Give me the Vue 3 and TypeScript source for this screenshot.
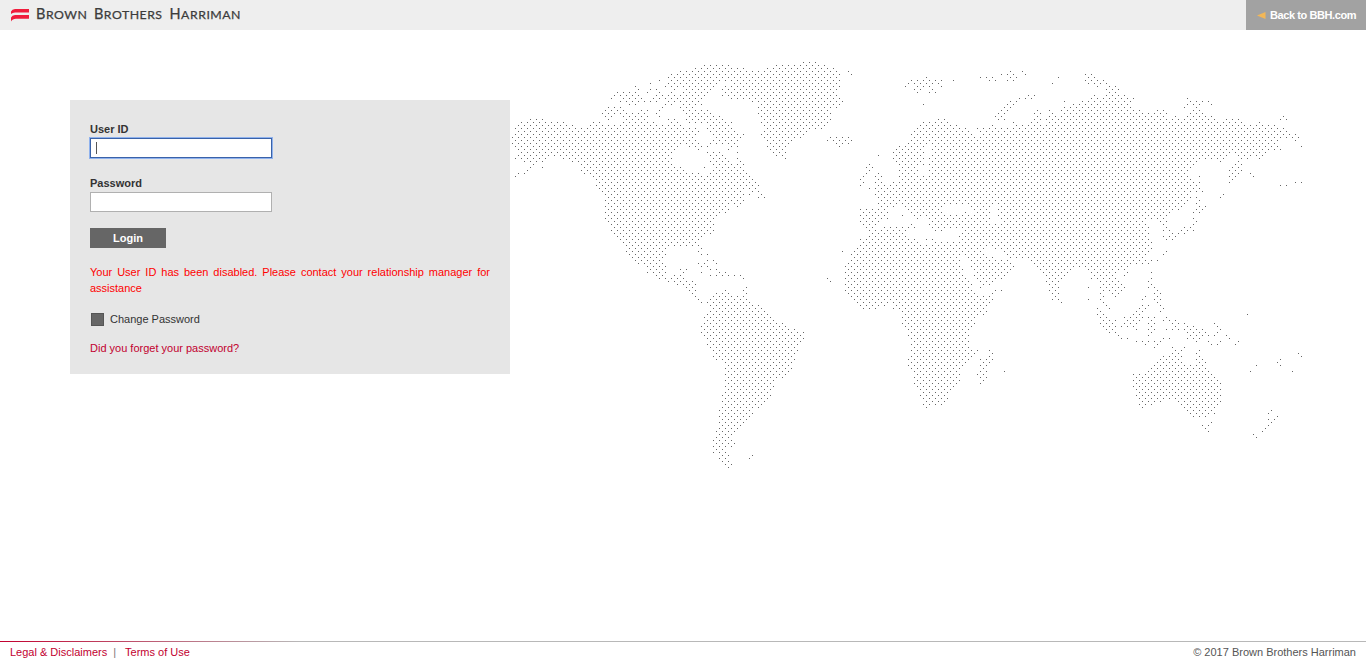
<script setup lang="ts">
import { ref, onMounted } from 'vue'

type Point = [number, number]

// Outlines are written in thirds of a pixel, relative to a page origin.
function trace(ox: number, oy: number, text: string): Point[] {
  return text.trim().split(/\s+/).map((pair) => {
    const [x, y] = pair.split(',').map(Number)
    return [ox + x / 3, oy + y / 3] as Point
  })
}

const NW: Point = [510, 55]
const ATL: Point = [680, 55]
const EUR: Point = [850, 55]
const SIB: Point = [1080, 55]
const SAM: Point = [600, 255]
const AFR: Point = [820, 250]
const AUS: Point = [1040, 240]

const landData: [Point, string][] = [
  // North America
  [NW, '7,247 16,220 34,202 61,193 97,193 106,202 160,202 187,211 196,220 214,220 250,202 268,202 277,211 349,211 340,202 349,184 367,175 385,175 394,166 412,166 412,193 430,202 448,211 466,211 475,193 493,193 511,211 520,220 547,220 556,211 565,229 556,238 556,256 565,265 565,283 538,274 538,265 511,265 493,283 484,292 484,328 493,337 511,337 520,346 547,355 565,355 565,364 592,364 592,535 574,544 556,571 475,571 466,580 466,598 457,607 457,625 385,625 367,607 349,589 349,571 322,544 304,526 304,508 286,490 286,418 259,391 259,373 241,355 223,355 214,346 214,328 205,319 187,319 178,310 160,310 151,301 133,301 106,310 97,319 43,319 34,310 16,310 25,292 16,274 7,265'],
  [ATL, '0,364 10,355 55,355 64,373 82,364 100,346 91,319 82,292 118,292 136,301 145,310 154,328 172,328 172,310 190,328 190,346 235,391 226,400 253,427 235,427 226,409 208,418 217,400 199,400 181,427 190,436 172,454 154,445 136,472 109,481 100,490 100,526 91,535 73,535 55,544 55,571 64,580 46,571 0,571'],
  [ATL, '10,166 82,166 91,175 118,184 136,202 154,202 163,220 172,229 190,238 172,256 172,274 145,283 145,265 91,265 100,256 109,247 91,229 82,220 82,202 64,202 46,211 28,202 18,184'],
  [ATL, '73,31 46,40 19,49 1,49 -26,58 -35,67 -35,85 -44,94 -26,103 -35,112 -44,130 -53,157 -71,175 -62,184 -44,148 -26,148 -8,130 0,157 10,166 18,193 82,184 82,166 28,166 37,157 64,148 73,130 82,112 118,76 154,76 163,85 136,94 127,103 136,112 127,121 145,121 154,130 208,130 217,139 235,148 235,175 244,184 244,202 253,220 244,238 253,238 262,274 289,301 307,301 316,310 316,283 325,265 343,247 361,247 379,238 388,220 424,220 442,211 451,193 451,166 469,157 487,139 469,121 469,103 478,94 478,49 460,40 433,31 406,22 370,22 343,31 289,31 262,40 253,49 199,49 190,40 154,40 145,31'],
  [NW, '304,130 322,112 376,112 394,130 403,139 385,139 376,148 358,148 331,139 340,130 322,121'],
  [NW, '277,175 295,157 331,157 349,175 340,193 331,184 322,175 313,184 295,193'],
  [NW, '421,139 439,121 457,121 439,139'],
  [ATL, '442,256 451,247 505,247 514,256 505,265 478,274 469,265 460,256'],
  [SAM, '97,7 106,16 124,16 142,34 142,52 160,52 178,70 196,70 205,79 223,79 232,88 250,88 277,115 304,142 286,124 286,88 277,79 259,79 250,70 250,52 259,43 241,43 241,61 223,61 214,70 196,61 196,34 187,25 187,7'],
  // South America
  [SAM, '322,142 331,133 349,115 367,115 376,106 394,124 430,124 430,106 439,97 439,133 457,151 475,151 529,205 547,205 565,223 583,223 610,232 610,250 592,268 592,286 583,313 574,340 547,367 529,367 520,376 520,394 511,421 475,457 457,457 457,475 403,529 394,538 394,556 403,565 394,574 376,583 385,601 385,619 394,628 385,637 358,610 358,592 340,592 340,556 349,547 349,529 358,520 358,466 367,457 367,421 376,412 376,322 367,313 349,313 340,304 340,286 322,268 322,250 304,232 304,214 313,205 313,187 340,160 331,151'],
  // Europe and western Asia
  [EUR, '130,292 148,274 166,274 184,256 184,238 220,202 247,202 265,193 283,193 301,211 319,211 346,220 373,238 382,247 391,238 382,220 418,220 427,211 436,220 490,220 499,211 517,211 544,202 553,193 553,175 562,166 571,175 571,193 580,211 589,193 598,166 625,193 634,166 643,139 643,157 670,148 688,148 697,139 715,139 715,607 4,607 22,580 31,553 49,544 67,526 94,526 103,517 166,517 166,544 193,553 211,571 229,571 256,562 328,562 328,544 337,526 328,517 301,517 274,526 256,526 238,508 238,481 211,481 202,490 184,472 166,454 139,445 130,454 103,454 112,472 112,490 94,499 76,508 58,526 49,517 31,499 40,490 31,481 31,463 67,463 85,454 85,445 76,418 76,400 94,400 103,391 121,391 148,373 148,328 130,310'],
  // Siberia and China
  [SIB, '7,139 25,139 43,121 52,130 79,121 88,112 106,112 133,121 160,130 151,139 151,157 178,166 196,175 214,175 232,166 250,166 259,175 268,202 286,184 304,193 322,184 340,166 349,157 358,166 367,175 394,184 412,202 430,202 439,193 475,193 493,211 529,211 538,202 547,211 583,211 592,220 610,220 637,247 601,247 592,256 592,274 583,283 565,292 538,310 529,301 502,310 493,301 484,310 484,346 448,382 448,346 466,328 475,310 466,292 448,292 421,319 412,310 358,310 322,346 322,364 349,382 358,364 358,400 367,409 349,409 349,391 340,391 331,436 304,463 286,463 259,481 250,490 214,490 196,499 205,517 205,544 214,562 214,580 205,589 196,607 196,625 7,625'],
  [AUS, '0,7 334,7 334,25 289,70 271,70 253,88 235,88 226,97 226,115 253,142 226,169 208,151 190,133 190,187 181,178 190,169 181,160 181,124 172,115 154,115 154,97 136,79 100,79 55,124 55,160 46,178 37,178 28,151 19,124 0,88'],
  [AFR, '571,0 571,22 625,22 652,49 670,58 679,94 688,121 697,148 715,148 715,0'],
  // Africa and Arabia
  [AFR, '436,-5 436,4 445,31 454,49 445,58 463,76 472,94 481,112 508,103 526,85 544,85 580,49 571,22 571,-5'],
  [AFR, '103,4 94,13 76,49 76,121 112,166 130,175 166,175 193,166 202,157 220,157 220,175 238,175 247,184 247,220 265,238 265,265 274,283 274,310 265,328 265,346 283,364 283,400 301,418 301,436 310,463 319,472 328,463 364,463 382,445 400,409 418,391 418,373 436,337 454,319 472,301 445,301 445,247 463,220 463,202 490,193 499,184 517,148 517,130 544,121 526,121 508,130 490,139 472,139 472,130 454,103 436,85 427,67 418,31 418,4'],
  [AFR, '508,301 517,310 517,328 499,364 499,382 481,400 481,382 472,373 481,364 481,328 499,328'],
  // Indonesia and Australia
  [AUS, '172,205 190,214 208,232 226,241 226,268 208,277 181,250 181,232 172,223'],
  [AUS, '244,259 253,232 280,223 307,196 325,196 307,214 307,232 289,268 280,259'],
  [AUS, '280,403 298,403 334,385 370,349 388,349 397,340 397,322 406,331 424,331 433,322 424,349 433,367 451,376 460,376 469,358 469,340 478,331 478,349 496,367 505,394 541,430 541,484 523,511 523,520 505,529 460,529 442,511 424,493 406,475 361,484 334,493 307,502 298,493 289,457 280,439'],
]

const seaData: [Point, string][] = [
  [ATL, '-12,95 5,95 8,108 -2,120 -10,112'],
  [EUR, '228,285 245,262 246,285 232,300 240,318 228,325'],
  [EUR, '207,333 232,330 232,355 207,362'],
  [EUR, '272,465 290,448 355,448 370,462 365,478 345,472 320,477 285,478'],
  [EUR, '425,448 440,448 438,475 450,490 448,510 425,505 420,475'],
  [AFR, '487,8 500,-8 528,-2 545,10 560,15 565,27 540,27 512,20'],
  [AFR, '430,8 442,25 440,50 462,72 462,90 480,115 470,125 455,100 435,75 428,45 422,20'],
]

const isletData: [Point, string][] = [
  [NW, '16,364 25,355 43,355 52,346 61,337 70,328 97,337 376,94 385,103 421,85 448,76 421,103 439,103 412,112 583,337 592,274 592,292 574,274 448,112'],
  [ATL, '496,49 505,49 514,58 595,301 172,292 487,589 64,274 82,274 73,337 0,211 55,589 64,598 82,598 0,247 0,265 10,256 64,580'],
  [SAM, '295,25 304,34 304,52 313,25 322,16 340,16 349,25 322,34 331,43 349,43 358,52 376,52 331,61 349,61 367,61 385,61 403,61 421,61 430,70 448,610 457,601'],
  [EUR, '229,67 184,76 202,76 220,76 238,76 256,76 274,76 175,85 193,85 211,85 229,85 247,85 265,85 166,94 202,94 220,94 238,94 274,94 193,103 211,103 247,103 202,112 238,112 256,112 310,76 220,148'],
  [EUR, '391,67 409,67 427,67 418,76 436,76 454,58 472,58 481,49 490,58 481,67 499,67 472,76 490,76 517,49 526,58 625,67 607,85'],
  [EUR, '436,184 445,175 454,166 463,157 472,148 481,139 445,193 454,184 463,175 472,166 481,157 490,148 499,139 508,130 526,130 535,121 553,121 544,130 463,193 490,202'],
  [EUR, '58,328 49,337 67,337 58,346 49,355 85,355 40,364 76,364 94,364 31,373 76,373 85,373 40,382 76,382 94,382 31,391 85,391 58,400 157,481 184,508 193,517 175,517 229,553 247,553'],
  [SIB, '16,58 34,58 25,67 43,67 16,76 34,76 52,76 70,76 25,85 43,85 61,85 79,85 52,94 88,94 106,94 79,103 97,103 115,103 322,130 331,139 349,139 367,139 385,139 394,148 322,148 340,148 358,148 313,157'],
  [SIB, '646,238 655,247 646,256 601,283 664,274 601,193 610,184 619,193 511,355 520,364 421,427 430,418 601,391 619,391 646,382 664,382'],
  [SIB, '349,427 358,436 358,454 376,454 349,445 349,463 367,463 340,472 358,472 340,490 349,499 340,508 331,517 340,526 322,526 304,526 313,517 313,535 295,535 286,544 277,553 277,535 268,544 259,553 250,544 268,526 250,508 259,517 250,526 259,499 241,499 259,589 250,598 214,616 232,616'],
  [AFR, '22,85 31,94 67,4 553,364'],
  [AUS, '145,142 145,178 55,178 64,187 262,97 253,106 325,70 334,61 352,61 370,43 379,34 199,196 208,205 235,286 226,277 244,295 262,295 289,304 307,304 325,304 316,313 343,304 361,304 352,313 370,295 388,295 343,322'],
  [AUS, '316,169 307,178 334,97 334,115 325,124 334,133 325,142 343,142 352,151 343,160 361,160 352,169 343,178 361,178 352,187 361,196 370,205 361,214 325,232 343,232 334,241 325,250 343,250 334,259 343,268 325,268 334,277 325,286'],
  [AUS, '379,232 370,241 388,241 406,241 397,250 415,250 433,250 406,259 379,268 397,268 415,268 433,268 442,259 460,259 451,268 469,268 487,268 442,277 460,277 478,277 496,277 451,286 469,286 487,286 505,286 442,295 460,295 478,295 469,304 505,304 514,313 532,313 541,304 523,286 532,277 541,268 532,259 523,250 559,286 568,295 595,304 586,313 622,223'],
  [AUS, '514,547 487,556 505,556 496,565 505,574 694,511 685,520 712,529 685,538 703,538 694,547 685,556 676,565 667,574 649,592 640,583 631,394 649,376 712,367 721,358 721,376 757,394 775,340 784,349'],
]

const build = (data: [Point, string][]) => data.map(([o, s]) => trace(o[0], o[1], s))

function inside(poly: Point[], x: number, y: number): boolean {
  let hit = false
  for (let i = 0, j = poly.length - 1; i < poly.length; j = i++) {
    const [ax, ay] = poly[i]
    const [bx, by] = poly[j]
    if (ay > y !== by > y && x < ((bx - ax) * (y - ay)) / (by - ay) + ax) hit = !hit
  }
  return hit
}

function nearEdge(poly: Point[], x: number, y: number): boolean {
  for (let i = 0, j = poly.length - 1; i < poly.length; j = i++) {
    const [ax, ay] = poly[i]
    const dx = poly[j][0] - ax
    const dy = poly[j][1] - ay
    const len = dx * dx + dy * dy || 1
    const t = Math.max(0, Math.min(1, ((x - ax) * dx + (y - ay) * dy) / len))
    if (Math.hypot(x - ax - t * dx, y - ay - t * dy) < 1.1) return true
  }
  return false
}

function dotPath(): string {
  const land = build(landData)
  const sea = build(seaData)
  const islets = new Set<string>()
  for (const points of build(isletData)) {
    for (const [x, y] of points) islets.add(`${Math.round((x - 2.5) / 3)},${Math.round((y - 2.5) / 3)}`)
  }
  let d = ''
  for (let row = 19; row < 157; row++) {
    for (let col = 169; col < 436; col++) {
      if ((row + col) % 2 === 0) continue
      const x = col * 3 + 2.5
      const y = row * 3 + 2.5
      const isLand = land.some((p) => inside(p, x, y) || nearEdge(p, x, y))
      if (islets.has(`${col},${row}`) || (isLand && !sea.some((p) => inside(p, x, y)))) {
        d += `M${x - 0.5} ${y - 0.5}h1v1h-1z`
      }
    }
  }
  return d
}

const worldDots = dotPath()
const userId = ref('')
const password = ref('')
const userInput = ref<HTMLInputElement | null>(null)
onMounted(() => userInput.value?.focus())
</script>

<template>
  <div class="page">
    <header class="top">
      <svg class="brand" width="250" height="30" viewBox="0 0 250 30" role="img" aria-label="Brown Brothers Harriman">
        <path d="M11 14V11.500Q12 9 15 9H29V12.500H15Q12.500 12.500 11 14Z" fill="#f01c3c" />
        <path d="M11 21.500V17.500Q12 15 15 15H29V18.700H16Q12.500 18.700 11 21.500Z" fill="#f01c3c" />
        <g fill="#3c3c3c" stroke="#3c3c3c" stroke-width="0.25">
          <text x="36" y="19" textLength="51" class="cap">B<tspan class="small">ROWN</tspan></text>
          <text x="94" y="19" textLength="68" class="cap">B<tspan class="small">ROTHERS</tspan></text>
          <text x="169.500" y="19" textLength="71" class="cap">H<tspan class="small">ARRIMAN</tspan></text>
        </g>
      </svg>
      <a class="back">
        <svg width="9" height="7" viewBox="0 0 9 7"><path d="M0 3.500L8.500 0V7Z" fill="#f3b757" /></svg>
        <span class="back-text">Back to BBH.com</span>
      </a>
    </header>

    <main class="content">
      <form class="panel" @submit.prevent>
        <label class="label" for="user">User ID</label>
        <input id="user" ref="userInput" v-model="userId" class="field" type="text" autocomplete="off" />
        <label class="label second" for="pass">Password</label>
        <input id="pass" v-model="password" class="field" type="password" />
        <button class="login" type="submit">Login</button>
        <p class="error">Your User ID has been disabled. Please contact your relationship manager for assistance</p>
        <div class="change"><span class="box"></span><span>Change Password</span></div>
        <a class="forgot">Did you forget your password?</a>
      </form>
      <svg class="map" width="800" height="410" viewBox="510 60 800 410" shape-rendering="crispEdges">
        <path :d="worldDots" fill="#666" />
      </svg>
    </main>

    <footer class="bottom">
      <nav class="links"><a>Legal &amp; Disclaimers</a><span class="bar">|</span><a>Terms of Use</a></nav>
      <span class="copy">© 2017 Brown Brothers Harriman</span>
    </footer>
  </div>
</template>

<style>
body { margin: 0; background: #fff; overflow: hidden; }
</style>

<style scoped>
.page { display: flex; flex-direction: column; height: 662px; font: 11px/16px "Liberation Sans", Arial, sans-serif; color: #333; }
.top { display: flex; justify-content: space-between; height: 30px; background: #eee; }
.brand { display: block; font-family: Lato, sans-serif; }
.cap { font-size: 14.5px; }
.small { font-size: 12.3px; }
.back { display: flex; align-items: center; gap: 4px; box-sizing: border-box; width: 120px; padding-left: 11px; background: #a2a2a2; color: #fff; font-weight: bold; white-space: nowrap; }
.back-text { letter-spacing: -0.41px; }
.content { flex: 1; display: flex; align-items: flex-start; padding-left: 70px; }
.panel { box-sizing: border-box; width: 440px; height: 274px; margin-top: 70px; padding: 21px 20px 0; background: #e6e6e6; }
.label { display: block; height: 17px; font-weight: bold; }
.second { margin-top: 16px; }
.field { display: block; box-sizing: border-box; width: 182px; height: 20px; padding: 0 5px; border: 1px solid #b0b0b0; background: #fff; color: #333; font: inherit; outline: none; }
.field:focus { border-color: #3a62a8; box-shadow: 0 0 0 1px #8fb2ee; caret-color: transparent; background: linear-gradient(#555, #555) 5px 3px / 1px 12px no-repeat #fff; }
.field:first-of-type { margin-bottom: 17px; }
.login { display: block; width: 76px; height: 20px; margin: 16px 0; padding: 0; border: 0; background: #666; color: #fff; font: bold 11px/20px "Liberation Sans", Arial, sans-serif; }
.error { margin: 0 0 15px; color: #f00; text-align: justify; }
.change { display: flex; align-items: center; height: 16px; margin-bottom: 13px; }
.box { box-sizing: border-box; width: 13px; height: 13px; margin: 1px 6px 0 1px; border: 1px solid #555; background: #666; }
.forgot { color: #c2002f; }
.map { display: block; flex: none; margin-top: 30px; }
.bottom { display: flex; justify-content: space-between; box-sizing: border-box; height: 21px; padding: 3px 10px 0; background: linear-gradient(90deg, #c2002f 0, #b8b8b8 300px) top / 100% 1px no-repeat; }
.links { display: flex; color: #c2002f; }
.bar { margin: 0 9px 0 6px; color: #777; }
.copy { color: #555; }
</style>
